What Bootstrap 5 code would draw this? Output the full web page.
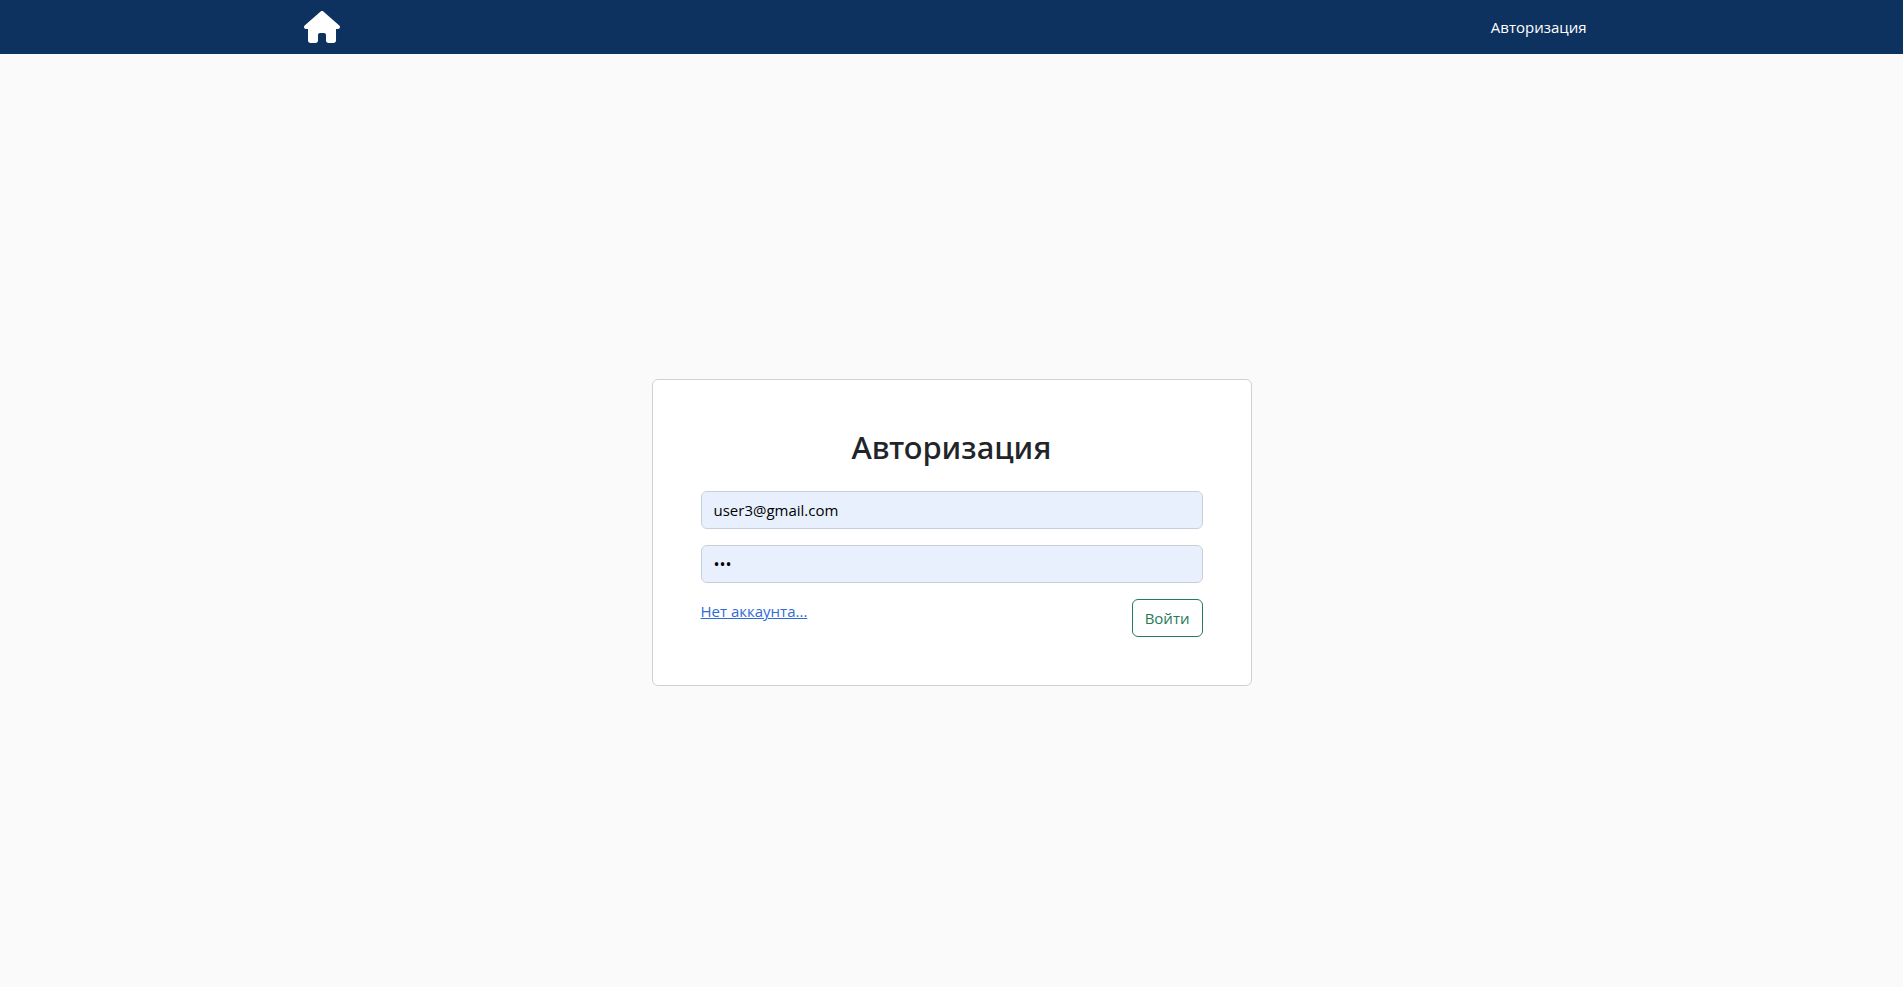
<!DOCTYPE html>
<html lang="ru">
<head>
<meta charset="utf-8">
<meta name="viewport" content="width=device-width, initial-scale=1">
<title>Авторизация</title>
<link href="https://cdn.jsdelivr.net/npm/bootstrap@5.3.0/dist/css/bootstrap.min.css" rel="stylesheet">
<style>
  body { font-family: "Segoe UI", "Open Sans", "Noto Sans", sans-serif; background-color: #fafafa; }
  .site-bar { background-color: #0d325f; min-height: 54px; }
  .login-card { max-width: 600px; border-color: #cfd1d3; }
  .login-title { font-family: "Segoe UI", "Noto Sans", sans-serif; font-size: 31px; line-height: 39px; }
  .text-regular, .form-control, .btn { font-size: 15px; line-height: 24px; }
  .form-control[type="password"] { font-size: 16px; }
  .filled, .filled:focus { background-color: #e8f0fe; border-color: #c5ced9; color: #000; }
  .signup-link { color: #2f6bd8; }
  .btn-outline-success { --bs-btn-color: #267a58; --bs-btn-border-color: #267a58; }
</style>
</head>
<body class="d-flex flex-column min-vh-100">
<nav class="site-bar navbar p-0">
  <div class="container">
    <a href="#" class="d-flex" aria-label="Главная">
      <svg width="36" height="32" viewBox="0 0 576 512" fill="#fff" aria-hidden="true"><path d="M575.8 255.5c0 18-15 32.1-32 32.1h-32l.7 160.2c0 2.7-.2 5.4-.5 8.1V472c0 22.1-17.9 40-40 40H456c-1.1 0-2.2 0-3.3-.1c-1.4 .1-2.8 .1-4.2 .1H416 392c-22.1 0-40-17.9-40-40V448 384c0-17.7-14.3-32-32-32H256c-17.7 0-32 14.3-32 32v64 24c0 22.1-17.9 40-40 40H160 128.1c-1.5 0-3-.1-4.5-.2c-1.2 .1-2.4 .2-3.6 .2H104c-22.1 0-40-17.9-40-40V360c0-.9 0-1.9 .1-2.8V287.6H32c-18 0-32-14-32-32.1c0-9 3-17 10-24L266.4 8c7-7 15-8 22-8s15 2 21 7L564.8 231.5c8 7 12 15 11 24z"/></svg>
    </a>
    <a href="#" class="btn text-white">Авторизация</a>
  </div>
</nav>
<main class="container flex-fill d-flex justify-content-center align-items-center pt-4">
  <div class="login-card card w-100 p-5">
    <h2 class="login-title text-center mb-4">Авторизация</h2>
    <form class="d-flex flex-column gap-3">
      <input type="email" class="form-control filled" value="user3@gmail.com" aria-label="Email">
      <input type="password" class="form-control filled" value="123" aria-label="Пароль">
      <div class="d-flex justify-content-between align-items-start">
        <a href="#" class="signup-link text-regular">Нет аккаунта...</a>
        <button type="button" class="btn btn-outline-success">Войти</button>
      </div>
    </form>
  </div>
</main>
<script src="https://cdn.jsdelivr.net/npm/bootstrap@5.3.0/dist/js/bootstrap.bundle.min.js"></script>
</body>
</html>
